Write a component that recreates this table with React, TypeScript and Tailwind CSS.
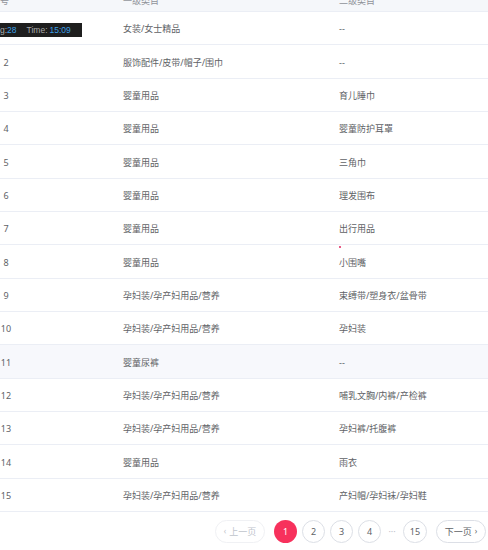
const ROWS: [string, string][] = [
  ['女装/女士精品', '--'],
  ['服饰配件/皮带/帽子/围巾', '--'],
  ['婴童用品', '育儿睡巾'],
  ['婴童用品', '婴童防护耳罩'],
  ['婴童用品', '三角巾'],
  ['婴童用品', '理发围布'],
  ['婴童用品', '出行用品'],
  ['婴童用品', '小围嘴'],
  ['孕妇装/孕产妇用品/营养', '束缚带/塑身衣/盆骨带'],
  ['孕妇装/孕产妇用品/营养', '孕妇装'],
  ['婴童尿裤', '--'],
  ['孕妇装/孕产妇用品/营养', '哺乳文胸/内裤/产检裤'],
  ['孕妇装/孕产妇用品/营养', '孕妇裤/托腹裤'],
  ['婴童用品', '雨衣'],
  ['孕妇装/孕产妇用品/营养', '产妇帽/孕妇袜/孕妇鞋'],
]

const FONT = { fontFamily: '"Noto Sans", "Noto Sans CJK SC", sans-serif' }

export default function App() {
  return (
    <div className="relative w-[488px] h-[550px] overflow-hidden bg-white text-[9px] text-[#606266]" style={FONT}>
      {/* Table */}
      <div className="-mt-[12px]">
        <div className="grid grid-cols-[123px_216px_1fr] h-[24px] items-center pt-[2px] bg-[#f5f7fa] border-b border-[#ebeef5] text-[#909399]">
          <div className="-ml-[9px]">编号</div>
          <div>一级类目</div>
          <div>二级类目</div>
        </div>
        {ROWS.map(([first, second], i) => (
          <div
            key={i}
            className={`relative grid grid-cols-[123px_216px_1fr] h-[33.33px] items-center pt-[2px] border-b border-[#ebeef5] ${
              i === 10 ? 'bg-[#f7f8fc]' : 'bg-white'
            }`}
          >
            <div className="w-[12px] text-center">{i + 1}</div>
            <div>{first}</div>
            <div className="relative">
              {i === 7 && <span className="absolute left-0 -top-[10px] w-[2px] h-[2px] rounded-full bg-[#e0245e]" />}
              {second}
            </div>
          </div>
        ))}
      </div>

      {/* Pagination */}
      <div className="flex justify-end items-center gap-[5px] pr-[2px] pt-[8px]">
        <button className="h-[23px] w-[50px] rounded-full border border-[#f0f1f4] text-[#c0c4cc] flex items-center justify-center gap-[3px]">
          <span className="text-[8px]">‹</span>上一页
        </button>
        <button className="h-[23px] w-[23px] rounded-full bg-[#f7315c] text-white flex items-center justify-center ml-[4px]">1</button>
        {['2', '3', '4'].map(n => (
          <button key={n} className="h-[23px] w-[23px] rounded-full border border-[#dcdfe6] flex items-center justify-center">
            {n}
          </button>
        ))}
        <span className="w-[12px] text-center text-[#c0c4cc]">···</span>
        <button className="h-[23px] w-[24px] rounded-full border border-[#dcdfe6] flex items-center justify-center">15</button>
        <button className="h-[23px] w-[50px] rounded-full border border-[#dcdfe6] flex items-center justify-center gap-[3px] ml-[4px]">
          下一页<span className="text-[8px]">›</span>
        </button>
      </div>

      {/* Debug overlay */}
      <div className="absolute left-0 top-[23px] h-[14px] w-[82px] bg-[#1e1e1e] flex items-center text-[8.5px] leading-none whitespace-nowrap" style={{ fontFamily: '"Liberation Sans", sans-serif' }}>
        <span className="text-[#aaaaaa]">g:</span>
        <span className="text-[#3b9ee6]">28</span>
        <span className="text-[#aaaaaa] ml-[10px]">Time:</span>
        <span className="text-[#3b9ee6] ml-[2px]">15:09</span>
      </div>
    </div>
  )
}
